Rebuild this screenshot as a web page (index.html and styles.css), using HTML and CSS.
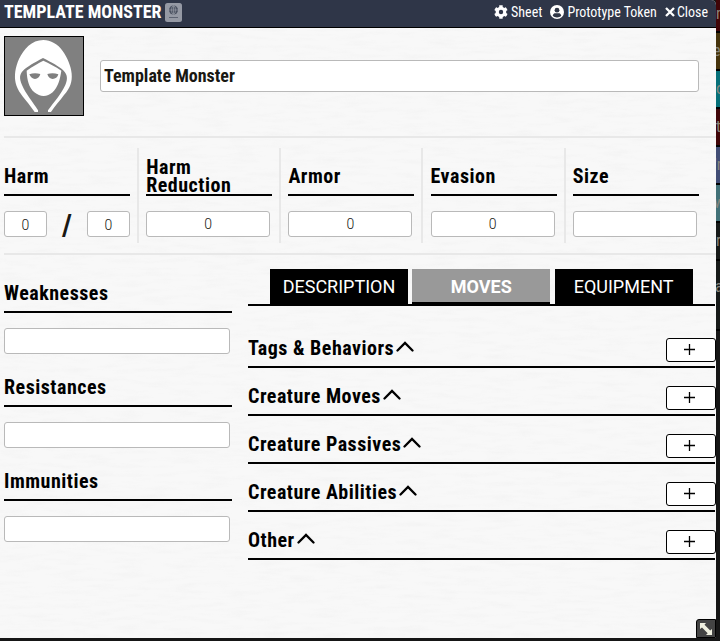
FILE: index.html
```html
<!DOCTYPE html>
<html lang="en">
<head>
<meta charset="utf-8">
<title>Template Monster</title>
<link rel="stylesheet" href="styles.css">
</head>
<body>
<aside class="directory" aria-hidden="true">
  <div class="folder red first">n</div><div class="folder brown">e</div><div class="folder teal">o</div><div class="folder red">t</div><div class="folder blue">'n</div><div class="folder cyan">w</div><div class="folder">r</div><div class="folder low">a</div>
</aside>
<main class="window">
  <svg class="grain" width="716" height="638"><filter id="paper" x="0" y="0" width="100%" height="100%"><feTurbulence type="fractalNoise" baseFrequency=".035 .22" numOctaves="4" seed="8"/><feColorMatrix values="0 0 0 0 .4  0 0 0 0 .4  0 0 0 0 .4  .35 0 0 0 -.155"/></filter><rect width="716" height="638" filter="url(#paper)"/></svg>
  <header class="titlebar">
    <h1>TEMPLATE MONSTER</h1>
    <svg class="passport" viewBox="0 0 17 19"><rect width="17" height="19" rx="2.5" fill="#9599a4"/><circle cx="8.500" cy="7" r="4.500" fill="#4a5161"/><path d="M4 7h9M8.500 2.500v9" stroke="#9599a4" stroke-width=".7"/><ellipse cx="8.500" cy="7" rx="2" ry="4.200" fill="none" stroke="#9599a4" stroke-width=".7"/><path d="M4 14.500h9" stroke="#5d6372"/></svg>
    <nav>
      <a><svg class="cog" viewBox="0 0 512 512"><path fill="#fff" d="M487 316l-43-25c4-23 4-47 0-70l43-25c5-3 7-8 5-14-11-36-30-69-55-95-4-4-10-5-15-2l-43 24c-18-15-39-27-61-35V24c0-5-4-10-9-11-36-8-74-8-110 0-5 1-9 6-9 11v50c-22 8-43 20-61 35L86 85c-5-3-11-2-15 2-25 27-44 59-55 95-2 5 1 11 5 14l43 25c-4 23-4 47 0 70l-43 25c-5 3-7 8-5 14 11 36 30 69 55 95 4 4 10 5 15 2l43-25c18 16 39 28 61 36v49c0 6 4 10 9 12 36 8 74 7 110 0 5-2 9-6 9-12v-49c22-8 43-20 61-36l43 25c5 3 11 2 15-2 25-27 44-59 55-95 2-5-1-11-5-14zm-231 20a80 80 0 110-160 80 80 0 010 160z"/></svg><span>Sheet</span></a>
      <a><svg class="user" viewBox="0 0 14 14"><circle cx="7" cy="7" r="7" fill="#fff"/><circle cx="7" cy="5.200" r="2.400" fill="#2f3646"/><path d="M2.700 10.800c.5-2 1.600-2.500 2.600-2.500h3.400c1 0 2.100.5 2.600 2.500-2.300 2.300-6.300 2.300-8.600 0z" fill="#2f3646"/></svg><span>Prototype Token</span></a>
      <a><svg class="close" viewBox="0 0 10 10"><path d="M1 1l8 8M9 1l-8 8" stroke="#fff" stroke-width="2.300"/></svg><span>Close</span></a>
    </nav>
  </header>

  <section class="profile">
    <svg class="portrait" viewBox="15 111 234 234"><path fill="#fff" d="M130 120C95 120 71 148 57 177C46 202 42 226 47 249C53 274 70 291 84 309L104 336H114V331C98 305 77 281 66 255C57 234 59 222 69 212C82 199 105 187 129 174C154 187 178 199 191 212C202 223 204 236 196 255C184 282 162 306 144 331V336H153C164 319 179 303 192 285C211 263 217 245 215 221C213 198 202 173 188 153C174 132 152 120 130 120Z"/><path fill="#fff" d="M130 182C115 190 97 199 80 212C81 241 87 262 103 277C121 292 142 291 158 277C174 261 180 239 184 212C167 199 146 190 130 182Z"/><path fill="#808080" d="M88 223C98 219 110 219 121 222C119 231 113 236 105 237C97 237 91 231 88 223ZM142 222C153 219 164 219 175 223C173 232 166 237 158 237C150 236 144 231 142 222Z"/></svg>
    <div class="field name">Template Monster</div>
  </section>

  <section class="stats">
    <div class="stat"><h2>Harm</h2><div class="pair"><div class="field">0</div><b>/</b><div class="field">0</div></div></div>
    <div class="stat"><h2>Harm Reduction</h2><div class="field">0</div></div>
    <div class="stat"><h2>Armor</h2><div class="field">0</div></div>
    <div class="stat"><h2>Evasion</h2><div class="field">0</div></div>
    <div class="stat"><h2>Size</h2><div class="field"></div></div>
  </section>

  <div class="content">
    <section class="traits">
      <h2>Weaknesses</h2><div class="field"></div>
      <h2>Resistances</h2><div class="field"></div>
      <h2>Immunities</h2><div class="field"></div>
    </section>
    <section class="details">
      <nav class="tabs"><a>DESCRIPTION</a><a class="active">MOVES</a><a>EQUIPMENT</a></nav>
      <div class="group"><h2>Tags &amp; Behaviors</h2><svg class="chevron" viewBox="0 0 18 11"><path d="M1.500 9.500L9 2l7.500 7.500"/></svg><button><svg viewBox="0 0 11 11"><path d="M5.500 0v11M0 5.500h11"/></svg></button></div>
      <div class="group"><h2>Creature Moves</h2><svg class="chevron" viewBox="0 0 18 11"><path d="M1.500 9.500L9 2l7.500 7.500"/></svg><button><svg viewBox="0 0 11 11"><path d="M5.500 0v11M0 5.500h11"/></svg></button></div>
      <div class="group"><h2>Creature Passives</h2><svg class="chevron" viewBox="0 0 18 11"><path d="M1.500 9.500L9 2l7.500 7.500"/></svg><button><svg viewBox="0 0 11 11"><path d="M5.500 0v11M0 5.500h11"/></svg></button></div>
      <div class="group"><h2>Creature Abilities</h2><svg class="chevron" viewBox="0 0 18 11"><path d="M1.500 9.500L9 2l7.500 7.500"/></svg><button><svg viewBox="0 0 11 11"><path d="M5.500 0v11M0 5.500h11"/></svg></button></div>
      <div class="group"><h2>Other</h2><svg class="chevron" viewBox="0 0 18 11"><path d="M1.500 9.500L9 2l7.500 7.500"/></svg><button><svg viewBox="0 0 11 11"><path d="M5.500 0v11M0 5.500h11"/></svg></button></div>
    </section>
  </div>
  <div class="resize"><svg viewBox="0 0 12 12"><path fill="#f0f0e0" d="M0 0h6L4.500 1.800l5.700 5.700L12 6v6H6l1.700-1.800L2 4.500 0 6z"/></svg></div>
</main>
</body>
</html>
```

FILE: styles.css
```css
* { box-sizing: border-box; }
body {
  margin: 0;
  width: 720px;
  height: 641px;
  overflow: hidden;
  position: relative;
  background: #161616;
  color: #191813;
  font-family: "Roboto Condensed", Roboto, "Liberation Sans", sans-serif;
  font-stretch: 75%;
}
h1, h2 { margin: 0; }
svg { display: block; flex: none; }

.directory { position: absolute; left: 716px; top: 0; width: 4px; overflow: hidden; }
.folder {
  height: 38px;
  border-bottom: 2px solid #000;
  background: #171a19;
  color: #89867c;
  font-size: 16px;
  line-height: 36px;
}
.folder.first { height: 33px; line-height: 27px; }
.folder.red { background: #400508; }
.folder.brown { background: #46340d; text-indent: -3px; }
.folder.teal { background: #067079; }
.folder.blue { background: #414d75; text-indent: -2px; }
.folder.cyan { background: #427178; text-indent: -2px; }
.folder.low { height: 70px; padding-top: 8px; text-indent: -1px; }

.window {
  position: relative;
  width: 716px;
  height: 638px;
  border-radius: 0 5px 0 0;
  overflow: hidden;
  background: #f8f8f8;
}
.grain { position: absolute; inset: 0; opacity: .3; }
.titlebar, .profile, .stats, .content { position: relative; }
.titlebar {
  height: 28px;
  display: flex;
  align-items: center;
  padding: 0 8px 3px 4px;
  border-bottom: 1px solid #000;
  background: #2f3648;
  color: #fff;
}
.titlebar h1 { font-size: 18px; line-height: 24px; font-weight: 700; white-space: nowrap; }
.passport { width: 17px; height: 19px; margin-left: 3px; }
.titlebar nav { display: flex; gap: 8px; margin-left: auto; }
.titlebar a { display: flex; align-items: center; gap: 3px; font-size: 14px; line-height: 20px; white-space: nowrap; }
.cog, .user { width: 14px; height: 14px; }
.close { width: 10px; height: 10px; margin-right: -1px; }

.field {
  height: 26px;
  border: 1px solid #b9b9b9;
  border-radius: 3px;
  background: #fff;
  text-align: center;
  font-family: Roboto, sans-serif;
  font-stretch: 100%;
  font-weight: 300;
  font-size: 14px;
  line-height: 24px;
}
.profile { display: flex; height: 110px; padding: 8px 17px 0 0; gap: 16px; border-bottom: 2px solid #e8e8e8; margin-left: 4px; }
.portrait { width: 80px; height: 80px; border: 1px solid #000; background: #808080; }
.field.name { flex: 1; height: 32px; margin-top: 24px; padding-left: 3px; text-align: left; font-size: 18px; line-height: 30px; font-weight: 700; font-stretch: 75%; }

h2 {
  color: #000;
  font-size: 20px;
  line-height: 18px;
  font-weight: 700;
  letter-spacing: .5px;
}
.stats {
  display: grid;
  grid-template-columns: repeat(5, 142.2px);
  height: 117px;
  margin-left: 4px;
  padding-top: 10px;
  border-bottom: 2px solid #e8e8e8;
}
.stat { width: 135px; height: 95px; padding-right: 7px; border-right: 2px solid #e8e8e8; }
.stat:last-child { border: 0; }
.stat h2 { width: 126px; height: 48px; padding-top: 9px; display: flex; align-items: center; border-bottom: 2px solid #000; }
.stat > .field { width: 124px; margin-top: 15px; }
.pair { width: 126px; display: flex; justify-content: space-between; margin-top: 15px; }
.pair .field { width: 43px; line-height: 26px; }
.pair b { font-size: 30px; line-height: 28px; }

.content { display: flex; gap: 16px; padding-left: 4px; }
.traits { width: 228px; padding-top: 23px; }
.traits h2 { height: 35px; padding-top: 6px; border-bottom: 2px solid #000; }
.traits .field { width: 226px; margin: 15px 0 18px; }
.details { width: 467px; padding-top: 14px; }
.tabs { display: flex; height: 37px; padding-left: 22px; gap: 4.300px; border-bottom: 2px solid #000; }
.tabs a { width: 138px; height: 35px; background: #000; color: #fff; text-align: center; font-family: Roboto, sans-serif; font-stretch: 100%; font-size: 18px; line-height: 36px; }
.tabs .active { background: #999; font-weight: 700; border-bottom: 2px solid #000; }
.group { display: flex; height: 48px; border-bottom: 2px solid #000; padding-top: 18px; }
.tabs + .group { height: 62px; padding-top: 32px; }
.group h2 { white-space: nowrap; padding-top: 1px; }
.chevron { width: 18px; height: 11px; margin: 3px 0 0 2px; }
.chevron path { fill: none; stroke: #000; stroke-width: 2.300; stroke-linecap: round; }
.group button { display: flex; align-items: center; justify-content: center; width: 50px; height: 24px; margin: 0 -1px 0 auto; padding: 0; border: 1px solid #000; border-radius: 3px; background: #fff; }
.group button svg { width: 11px; height: 11px; margin-top: -1px; margin-right: 3px; }
.group button path { stroke: #000; stroke-width: 1.300; }

.resize { position: absolute; right: 0; bottom: 0; width: 20px; height: 19px; border: 1px solid #000; border-radius: 3px 0 0; background: #444; padding: 3px; }
.resize svg { width: 12px; height: 12px; }
```
